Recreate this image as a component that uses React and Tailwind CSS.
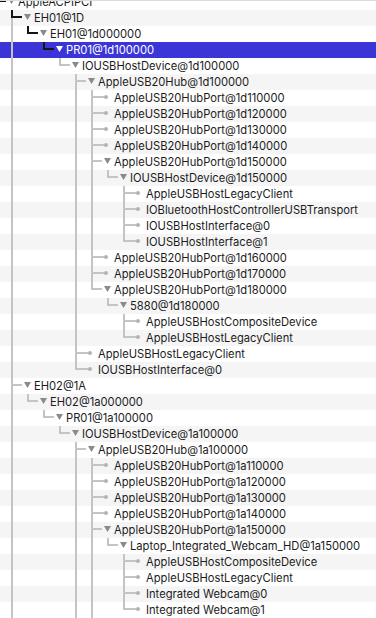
const LINE = "#c4c4c4";
const DARK = "#151515";
const TRI = "#8a8a8a";

const n = (label, children = []) => ({ label, children });
const ports = (prefix, ids, extra = {}) =>
  ids.map((id) => n(`AppleUSB20HubPort@${prefix}${id}`, extra[id] || []));

const tree = n("AppleACPIPCI", [
  n("EH01@1D", [
    n("EH01@1d000000", [
      n("PR01@1d100000", [
        n("IOUSBHostDevice@1d100000", [
          n(
            "AppleUSB20Hub@1d100000",
            ports("1d1", ["10000", "20000", "30000", "40000", "50000", "60000", "70000", "80000"], {
              "50000": [
                n("IOUSBHostDevice@1d150000", [
                  n("AppleUSBHostLegacyClient"),
                  n("IOBluetoothHostControllerUSBTransport"),
                  n("IOUSBHostInterface@0"),
                  n("IOUSBHostInterface@1"),
                ]),
              ],
              "80000": [
                n("5880@1d180000", [n("AppleUSBHostCompositeDevice"), n("AppleUSBHostLegacyClient")]),
              ],
            })
          ),
          n("AppleUSBHostLegacyClient"),
          n("IOUSBHostInterface@0"),
        ]),
      ]),
    ]),
  ]),
  n("EH02@1A", [
    n("EH02@1a000000", [
      n("PR01@1a100000", [
        n("IOUSBHostDevice@1a100000", [
          n(
            "AppleUSB20Hub@1a100000",
            ports("1a1", ["10000", "20000", "30000", "40000", "50000", "60000"], {
              "50000": [
                n("Laptop_Integrated_Webcam_HD@1a150000", [
                  n("AppleUSBHostCompositeDevice"),
                  n("AppleUSBHostLegacyClient"),
                  n("Integrated Webcam@0"),
                  n("Integrated Webcam@1"),
                ]),
              ],
            })
          ),
          n("AppleUSBHostLegacyClient"),
        ]),
      ]),
    ]),
  ]),
  n("XHC@14"),
]);

const SELECTED = "PR01@1d100000";

// flatten the tree, remembering which ancestor lines keep going
function flatten(node, level, isLast, cont, out, path) {
  const item = { label: node.label, level, isLast, cont, hasChildren: node.children.length > 0 };
  out.push(item);
  const here = [...path, item];
  if (node.label === SELECTED) here.forEach((p) => (p.onPath = true));
  node.children.forEach((c, i) => {
    flatten(c, level + 1, i === node.children.length - 1, [...cont, !isLast], out, here);
  });
  return out;
}

// only the rows that fit in the window
const rows = flatten(tree, 0, false, [], [], []).slice(0, 39);

function Lines({ item, selected }) {
  const L = item.level;
  const w = 18 + 16 * L;
  const px = 12 + 16 * (L - 1);
  const end = item.hasChildren ? 6 + 16 * L : 10 + 16 * L;
  const elbow = item.onPath ? DARK : LINE;
  return (
    <svg width={w} height={16} className="shrink-0 overflow-visible">
      {item.cont.map((on, k) =>
        on && k >= 1 ? <rect key={k} x={11 + 16 * (k - 1)} y={0} width={2} height={16} fill={LINE} /> : null
      )}
      {!item.isLast && <rect x={px - 1} y={7} width={2} height={9} fill={LINE} />}
      <rect x={px - 1} y={0} width={2} height={8} fill={elbow} />
      <rect x={px - 1} y={6} width={end - px + 1} height={2} fill={elbow} />
      {item.hasChildren ? (
        <polygon
          points={`${8 + 16 * L},4 ${15 + 16 * L},4 ${11.5 + 16 * L},10`}
          fill={selected ? "#ffffff" : TRI}
        />
      ) : (
        <circle cx={10 + 16 * L} cy={7} r={2} fill="#b4b4b4" />
      )}
    </svg>
  );
}

export default function App() {
  return (
    <div className="h-[618px] w-[376px] overflow-hidden border-t border-[#dcdcdc] bg-white font-['Inter',sans-serif]">
      <div className="-mt-[7px] flex flex-col">
        {rows.map((item, i) => {
          const selected = item.label === SELECTED;
          const bg = selected ? "bg-[#3b35d8]" : i % 2 ? "bg-[#f5f5f5]" : "bg-white";
          return (
            <div key={i} className={`flex h-4 items-center ${bg}`}>
              <Lines item={item} selected={selected} />
              <span
                className={`whitespace-nowrap text-[11.2px] leading-4 ${selected ? "text-white" : "text-[#1c1c1c]"}`}
              >
                {item.label}
              </span>
            </div>
          );
        })}
      </div>
    </div>
  );
}
